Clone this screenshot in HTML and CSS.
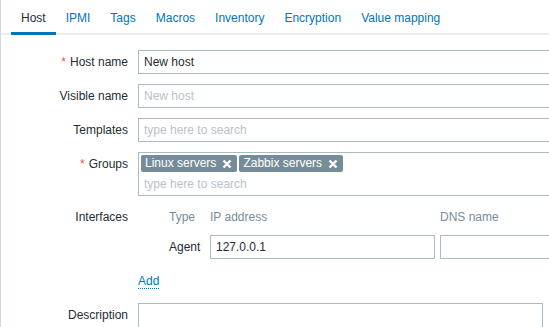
FILE: index.html
```html
<!DOCTYPE html>
<html lang="en">
<head>
    <meta charset="UTF-8">
    <meta name="viewport" content="width=device-width, initial-scale=1.0">
    <title>New host</title>
    <link rel="stylesheet" href="styles.css">
</head>
<body>
 <div class="page">
    <ul class="tabs">
        <li class="tab active">Host</li>
        <li class="tab">IPMI</li>
        <li class="tab">Tags</li>
        <li class="tab">Macros</li>
        <li class="tab">Inventory</li>
        <li class="tab">Encryption</li>
        <li class="tab">Value mapping</li>
    </ul>

    <form class="form_grid">
        <label class="form_label required" for="host">Host name</label>
        <div class="form_field">
            <input type="text" class="text_input" id="host" value="New host">
        </div>

        <label class="form_label" for="visible">Visible name</label>
        <div class="form_field">
            <input type="text" class="text_input" id="visible" placeholder="New host">
        </div>

        <label class="form_label" for="templates">Templates</label>
        <div class="form_field">
            <input type="text" class="text_input" id="templates" placeholder="type here to search">
        </div>

        <label class="form_label required" for="groups">Groups</label>
        <div class="form_field">
            <div class="multiselect">
                <div class="chips">
                    <span class="chip">Linux servers
                        <svg class="chip_remove" viewBox="0 0 10 10"><path d="M1.5 1.5L8.5 8.5M8.5 1.5L1.5 8.5"/></svg>
                    </span>
                    <span class="chip">Zabbix servers
                        <svg class="chip_remove" viewBox="0 0 10 10"><path d="M1.5 1.5L8.5 8.5M8.5 1.5L1.5 8.5"/></svg>
                    </span>
                </div>
                <input type="text" class="ms_search" id="groups" placeholder="type here to search">
            </div>
        </div>

        <div class="form_label interfaces_label">Interfaces</div>
        <div class="form_field">
            <div class="iface_table">
                <div class="iface_head">
                    <span class="col_handle"></span>
                    <span class="col_type">Type</span>
                    <span class="col_ip">IP address</span>
                    <span class="col_dns">DNS name</span>
                </div>
                <div class="iface_row">
                    <span class="col_handle"></span>
                    <span class="col_type">Agent</span>
                    <span class="col_ip"><input type="text" class="text_input" value="127.0.0.1"></span>
                    <span class="col_dns"><input type="text" class="text_input dns_input"></span>
                </div>
            </div>
        </div>

        <div class="form_label"></div>
        <div class="form_field add_row">
            <a href="#" class="link_dotted">Add</a>
        </div>

        <label class="form_label" for="description">Description</label>
        <div class="form_field">
            <textarea class="textarea" id="description"></textarea>
        </div>
    </form>
 </div>
</body>
</html>
```

FILE: styles.css
```css
* {
    box-sizing: border-box;
}

html, body {
    margin: 0;
    height: 100%;
    overflow: hidden;
}

body {
    background-color: #ffffff;
    font-family: "Liberation Sans", Arial, sans-serif;
    font-size: 12px;
    color: #1f2c33;
}

.page {
    min-height: 100%;
    border-left: 1px solid #cfd8dc;
    padding-left: 10px;
    overflow: hidden;
}

.tabs {
    display: flex;
    align-items: flex-start;
    list-style: none;
    margin: 0 0 0 -10px;
    padding: 0 0 0 10px;
    height: 35px;
    border-bottom: 2px solid #ebeef0;
    white-space: nowrap;
}

.tab {
    padding: 11px 10px 7px;
    line-height: 14px;
    color: #0275b8;
    border-bottom: 3px solid transparent;
}

.tab.active {
    color: #1f2c33;
    border-bottom-color: #0275b8;
}

.form_grid {
    display: grid;
    grid-template-columns: 117px 1fr;
    column-gap: 10px;
    row-gap: 10px;
    margin: 0;
    padding-top: 15px;
}

.form_label {
    text-align: right;
    line-height: 24px;
    white-space: nowrap;
}

.interfaces_label {
    line-height: 22px;
}

.required::before {
    content: "*";
    color: #e45959;
    margin-right: 4px;
}

.form_field {
    min-width: 0;
    white-space: nowrap;
}

.text_input {
    width: 453px;
    height: 24px;
    margin: 0;
    padding: 0 5px;
    border: 1px solid #acbbc2;
    border-radius: 0;
    font-family: inherit;
    font-size: 12px;
    color: #1f2c33;
    background-color: #ffffff;
    outline: none;
}

.text_input::placeholder, .ms_search::placeholder {
    color: #b7c3c9;
}

.multiselect {
    width: 453px;
    height: 44px;
    border: 1px solid #acbbc2;
    padding: 2px 0 0 2px;
}

.chips {
    display: flex;
    gap: 2px;
    height: 17px;
}

.chip {
    display: inline-flex;
    align-items: center;
    height: 17px;
    padding: 0 5px 0 4px;
    background-color: #768d99;
    color: #ffffff;
    border-radius: 2px;
    line-height: 17px;
}

.chip_remove {
    flex: none;
    width: 10px;
    height: 10px;
    margin-left: 6px;
    stroke: #ffffff;
    stroke-width: 2.4;
    fill: none;
}

.ms_search {
    display: block;
    width: 440px;
    height: 22px;
    margin: 1px 0 0 3px;
    padding: 0;
    border: none;
    font-family: inherit;
    font-size: 12px;
    outline: none;
}

.iface_head, .iface_row {
    display: flex;
    align-items: center;
}

.iface_head {
    height: 22px;
    color: #768d99;
}

.iface_row {
    height: 24px;
    margin-top: 7px;
}

.col_handle {
    width: 31px;
    flex: none;
}

.col_type {
    width: 41px;
    flex: none;
}

.col_ip {
    width: 230px;
    flex: none;
}

.col_ip .text_input {
    width: 225px;
}

.col_dns .dns_input {
    width: 200px;
}

.add_row {
    display: flex;
    align-items: center;
    height: 24px;
}

.link_dotted {
    display: inline-block;
    line-height: 14px;
    color: #0275b8;
    text-decoration: none;
    border-bottom: 1px dotted #0275b8;
}

.textarea {
    display: block;
    width: 405px;
    height: 60px;
    margin: 0;
    border: 1px solid #acbbc2;
    border-radius: 0;
    resize: none;
    font-family: inherit;
    font-size: 12px;
    outline: none;
}
```
